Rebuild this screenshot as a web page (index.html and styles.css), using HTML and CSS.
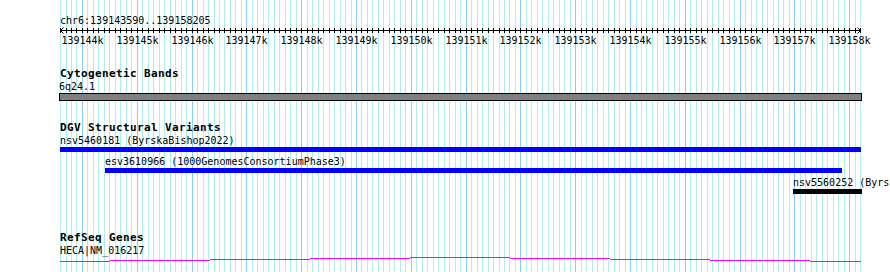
FILE: index.html
```html
<!DOCTYPE html>
<html lang="en">
<head>
  <meta charset="UTF-8">
  <title>chr6:139143590..139158205</title>
  <link rel="stylesheet" href="styles.css">
</head>
<body>
  <div class="panel">
    <svg id="grid" class="grid" width="890" height="272" shape-rendering="crispEdges"></svg>

    <div class="content">
      <!-- 눈금자 -->
      <div class="ruler">
        <div class="ruler-title">chr6:139143590..139158205</div>
        <svg id="axis" class="ruler-axis" width="890" height="7" shape-rendering="crispEdges"></svg>
        <div id="tick-labels" class="tick-labels"></div>
      </div>

      <!-- 트랙 -->
      <section class="track track-cyto">
        <h2 class="track-title">Cytogenetic Bands</h2>
        <div class="track-body">
          <div class="feature-row band-row">
            <div class="feature" style="left: -1px;">
              <div class="feature-label">6q24.1</div>
              <div class="band-bar" style="width: 803px;"></div>
            </div>
          </div>
        </div>
      </section>

      <section class="track track-dgv">
        <h2 class="track-title">DGV Structural Variants</h2>
        <div class="track-body">
          <div class="feature-row">
            <div class="feature" style="left: 0px;">
              <div class="feature-label">nsv5460181 (ByrskaBishop2022)</div>
              <div class="sv-bar" style="width: 801px;"></div>
            </div>
          </div>
          <div class="feature-row">
            <div class="feature" style="left: 45px;">
              <div class="feature-label">esv3610966 (1000GenomesConsortiumPhase3)</div>
              <div class="sv-bar" style="width: 737px;"></div>
            </div>
          </div>
          <div class="feature-row">
            <div class="feature" style="left: 733px;">
              <div class="feature-label">nsv5560252 (ByrskaBishop2022)</div>
              <div class="sv-bar sv-bar-dark" style="width: 69px;"></div>
            </div>
          </div>
        </div>
      </section>

      <section class="track track-refseq">
        <h2 class="track-title">RefSeq Genes</h2>
        <div class="track-body">
          <div class="feature-label">HECA|NM_016217</div>
          <svg class="gene-line" width="801" height="5" shape-rendering="crispEdges">
            <path d="M0 4.5H50M50 3.5H150M150 2.5H250M250 1.5H350M350 0.5H450M450 1.5H550M550 2.5H650M650 3.5H750M750 4.5H801"
                  stroke="#ff00ff" stroke-width="1" fill="none"/>
          </svg>
        </div>
      </section>
    </div>
  </div>

  <script>
    // 좌표 변환
    const view = { start: 139143590, end: 139158205, left: 60, width: 801 };
    const scale = view.width / (view.end - view.start);
    const toX = pos => Math.floor(view.left + (pos - view.start) * scale);
    const NS = 'http://www.w3.org/2000/svg';

    const grid = document.getElementById('grid');
    const axis = document.getElementById('axis');
    const tickLabels = document.getElementById('tick-labels');

    const svgEl = (tag, attrs) => {
      const el = document.createElementNS(NS, tag);
      Object.entries(attrs).forEach(([k, v]) => el.setAttribute(k, v));
      return el;
    };

    // 격자선 + 눈금
    for (let pos = 139143600; pos <= view.end; pos += 100) {
      const x = toX(pos);
      const major = pos % 1000 === 0;
      grid.appendChild(svgEl('rect', { x, y: 0, width: 1, height: 272, fill: major ? '#87cefa' : '#afeeee' }));
      axis.appendChild(svgEl('line', { x1: x + 0.5, y1: 1, x2: x + 0.5, y2: 6, stroke: '#000' }));

      if (major) {
        const label = document.createElement('span');
        label.className = 'tick-label';
        label.style.left = (x + 0.5) + 'px';
        label.textContent = (pos / 1000) + 'k';
        tickLabels.appendChild(label);
      }
    }

    // 축선과 화살표
    axis.appendChild(svgEl('line', { x1: 60, y1: 3.5, x2: 861, y2: 3.5, stroke: '#000' }));
    axis.appendChild(svgEl('polyline', { points: '63.5,0.5 60.5,3.5 63.5,6.5', stroke: '#000', fill: 'none', 'shape-rendering': 'auto' }));
    axis.appendChild(svgEl('polyline', { points: '857.5,0.5 860.5,3.5 857.5,6.5', stroke: '#000', fill: 'none', 'shape-rendering': 'auto' }));
  </script>
</body>
</html>
```

FILE: styles.css
```css
/* 기본 스타일 초기화 */
body, h2 { margin: 0; padding: 0; }
body {
  background: #fff;
  color: #000;
  font-family: 'DejaVu Sans Mono', 'Liberation Mono', monospace;
  font-size: 10px;
  line-height: 13px;
}

/* 전체 패널 */
.panel {
  position: relative;
  width: 890px;
  height: 272px;
  padding-top: 14px;
  box-sizing: border-box;
  overflow: hidden;
}
.grid { position: absolute; top: 0; left: 0; }
.content { position: relative; }

/* 눈금자 */
.ruler-title { padding-left: 60px; height: 13px; white-space: nowrap; }
.ruler-axis { display: block; }
.tick-labels { position: relative; height: 13px; }
.tick-label {
  position: absolute;
  top: 0;
  transform: translateX(-50%);
  white-space: nowrap;
}

/* 트랙 */
.track { margin-top: 20px; }
.track-refseq { margin-top: 34px; }
.track-title {
  padding-left: 60px;
  height: 13px;
  font-size: 11px;
  font-weight: bold;
  letter-spacing: 0.38px;
  line-height: 13px;
  white-space: nowrap;
}
.track-body { position: relative; margin-left: 60px; width: 801px; }

.feature-row { position: relative; height: 21px; }
.band-row { height: 21px; }
.feature { position: absolute; top: 0; }
.feature-label { height: 13px; white-space: nowrap; }

.band-bar {
  height: 8px;
  box-sizing: border-box;
  background: #808080;
  border: 1px solid #000;
}
.sv-bar { height: 5px; background: #0000ff; }
.sv-bar-dark { background: #000; }

.gene-line { display: block; }
```
